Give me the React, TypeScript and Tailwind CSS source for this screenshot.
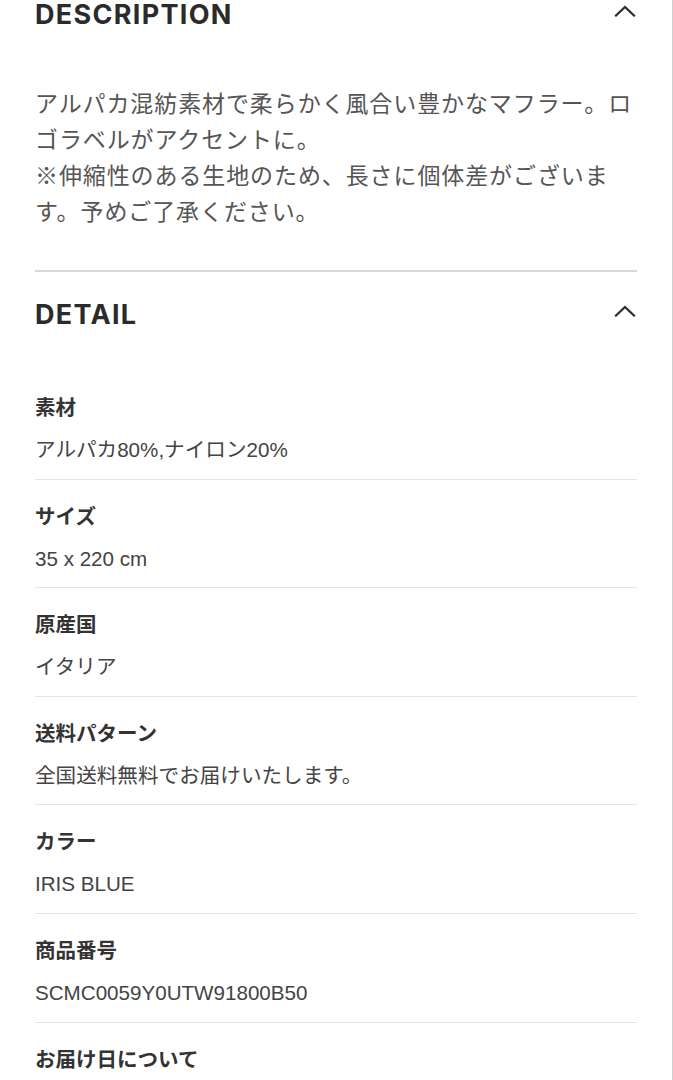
import React from "react";

const Chevron = () => (
  <svg width="22" height="12" viewBox="0 0 22 12" fill="none" className="shrink-0">
    <polyline points="2,10.5 11,2 20,10.5" stroke="#2b2b2b" strokeWidth="2.2" strokeLinecap="square" />
  </svg>
);

const rows: [string, string][] = [
  ["素材", "アルパカ80%,ナイロン20%"],
  ["サイズ", "35 x 220 cm"],
  ["原産国", "イタリア"],
  ["送料パターン", "全国送料無料でお届けいたします。"],
  ["カラー", "IRIS BLUE"],
  ["商品番号", "SCMC0059Y0UTW91800B50"],
  ["お届け日について", ""],
];

export default function App() {
  const head = { fontFamily: 'Inter, "Noto Sans", sans-serif' };
  const body = { fontFamily: '"Liberation Sans", "Noto Sans CJK JP", sans-serif' };
  return (
    <div className="w-[673px] h-[1080px] overflow-hidden bg-white border-r border-[#cfcfcf]">
      <div className="px-[35px]">
        {/* DESCRIPTION */}
        <div className="flex items-center justify-between h-[29px]">
          <h2 className="text-[27px] leading-[29px] font-bold text-[#2b2b2b] tracking-[1.3px]" style={head}>
            DESCRIPTION
          </h2>
          <div className="mr-[1px] -mt-[8px]">
            <Chevron />
          </div>
        </div>
        <p
          className="mt-[55px] text-[23px] leading-[36px] tracking-[0.9px] text-[#555555] whitespace-nowrap [text-spacing-trim:space-all]"
          style={{ fontFamily: '"Noto Sans CJK JP", "Liberation Sans", sans-serif' }}
        >
          アルパカ混紡素材で柔らかく風合い豊かなマフラー。ロ
          <br />
          ゴラベルがアクセントに。
          <br />
          ※伸縮性のある生地のため、長さに個体差がございま
          <br />
          す。予めご了承ください。
        </p>
        <div className="mt-[42px] h-[2px] bg-[#d9d9d9]" />

        {/* DETAIL */}
        <div className="mt-[28px] flex items-center justify-between h-[29px]">
          <h2 className="text-[27px] leading-[29px] font-bold text-[#2b2b2b] tracking-[1.3px]" style={head}>
            DETAIL
          </h2>
          <div className="mr-[1px] -mt-[8px]">
            <Chevron />
          </div>
        </div>

        <div className="mt-[42px]">
          {rows.map(([label, value], i) => (
            <div
              key={label}
              className={`pt-[22px] pb-[13.6px] ${i < rows.length - 1 ? "border-b border-[#e3e3e3]" : ""}`}
              style={body}
            >
              <div className="text-[20.5px] leading-[30px] font-bold text-[#333333]">{label}</div>
              <div className="mt-[12px] text-[20.6px] leading-[30px] text-[#444444] min-h-[30px]">{value}</div>
            </div>
          ))}
        </div>
      </div>
    </div>
  );
}
